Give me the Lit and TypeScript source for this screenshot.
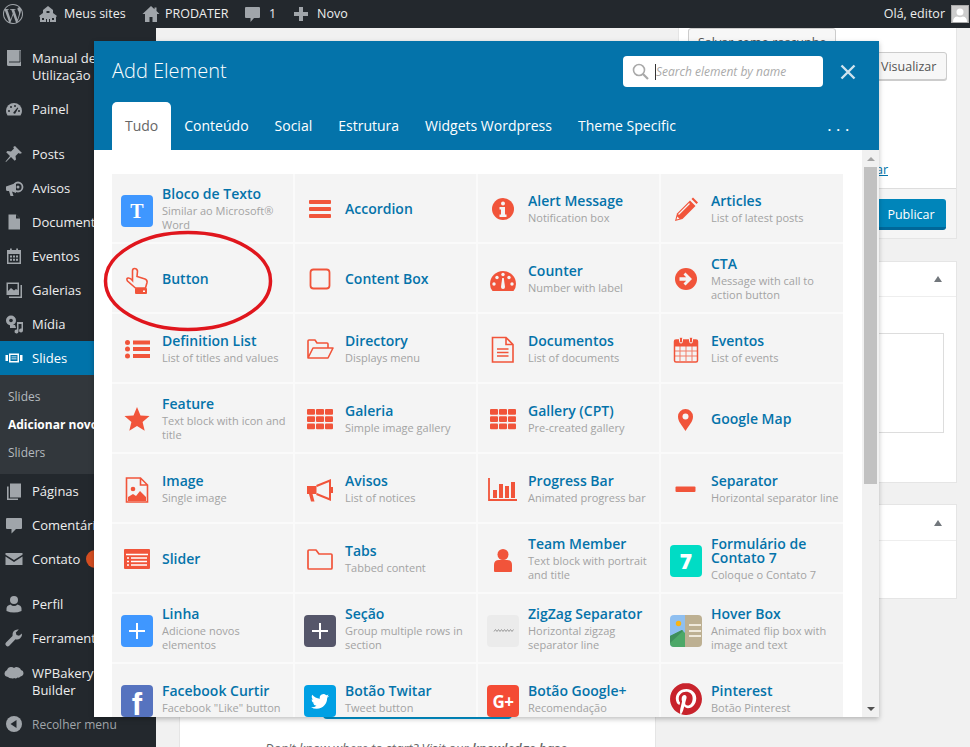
import { LitElement, html, css, svg } from 'lit';
import { customElement } from 'lit/decorators.js';

const WP_LOGO = 'M21.469 6.825c.84 1.537 1.318 3.3 1.318 5.175 0 3.979-2.156 7.456-5.363 9.325l3.295-9.527c.615-1.54.82-2.771.82-3.864 0-.405-.026-.78-.07-1.11m-7.981.105c.647-.03 1.232-.105 1.232-.105.582-.075.514-.93-.067-.899 0 0-1.755.135-2.88.135-1.064 0-2.85-.15-2.85-.15-.585-.03-.661.855-.075.885 0 0 .54.061 1.125.09l1.68 4.605-2.37 7.08L5.354 6.9c.649-.03 1.234-.1 1.234-.1.585-.075.516-.93-.065-.896 0 0-1.746.138-2.874.138-.2 0-.438-.008-.69-.015C4.911 3.15 8.235 1.215 12 1.215c2.809 0 5.365 1.072 7.286 2.833-.046-.003-.091-.009-.141-.009-1.06 0-1.812.923-1.812 1.914 0 .89.513 1.643 1.06 2.531.411.72.89 1.643.89 2.977 0 .915-.354 1.994-.821 3.479l-1.075 3.585-3.9-11.61.001.014zM12 22.784c-1.059 0-2.081-.153-3.048-.437l3.237-9.406 3.315 9.087c.024.053.05.101.078.149-1.12.393-2.325.609-3.582.609M1.211 12c0-1.564.336-3.05.935-4.39L7.29 21.709C3.694 19.96 1.212 16.271 1.211 12M12 0C5.385 0 0 5.385 0 12s5.385 12 12 12 12-5.385 12-12S18.615 0 12 0';
const TWITTER = 'M23.953 4.57a10 10 0 01-2.825.775 4.958 4.958 0 002.163-2.723c-.951.555-2.005.959-3.127 1.184a4.92 4.92 0 00-8.384 4.482C7.69 8.095 4.067 6.13 1.64 3.162a4.822 4.822 0 00-.666 2.475c0 1.71.87 3.213 2.188 4.096a4.904 4.904 0 01-2.228-.616v.06a4.923 4.923 0 003.946 4.827 4.996 4.996 0 01-2.212.085 4.936 4.936 0 004.604 3.417 9.867 9.867 0 01-6.102 2.105c-.39 0-.779-.023-1.17-.067a13.995 13.995 0 007.557 2.209c9.053 0 13.998-7.496 13.998-13.985 0-.21 0-.42-.015-.63A9.935 9.935 0 0024 4.59z';
const PINTEREST = 'M12.017 0C5.396 0 .029 5.367.029 11.987c0 5.079 3.158 9.417 7.618 11.162-.105-.949-.199-2.403.041-3.439.219-.937 1.406-5.957 1.406-5.957s-.359-.72-.359-1.781c0-1.663.967-2.911 2.168-2.911 1.024 0 1.518.769 1.518 1.688 0 1.029-.653 2.567-.992 3.992-.285 1.193.6 2.165 1.775 2.165 2.128 0 3.768-2.245 3.768-5.487 0-2.861-2.063-4.869-5.008-4.869-3.41 0-5.409 2.562-5.409 5.199 0 1.033.394 2.143.889 2.741.099.12.112.225.085.345-.09.375-.293 1.199-.334 1.363-.053.225-.172.271-.401.165-1.495-.69-2.433-2.878-2.433-4.646 0-3.776 2.748-7.252 7.92-7.252 4.158 0 7.392 2.967 7.392 6.923 0 4.135-2.607 7.462-6.233 7.462-1.214 0-2.354-.629-2.758-1.379l-.749 2.848c-.269 1.045-1.004 2.352-1.498 3.146 1.123.345 2.306.535 3.55.535 6.607 0 11.985-5.365 11.985-11.987C23.97 5.39 18.592.026 11.985.026L12.017 0z';

const A = '#f1543a';
const BG = '#f4f4f4';

const grid3 = svg`<g fill="${A}">
  ${[6, 13.2, 20.4].map(y => [3, 12, 21].map(x => svg`<rect x="${x}" y="${y}" width="8" height="5.8" rx="1"/>`))}
</g>`;

const plus = svg`<path d="M16 8v16M8 16h16" stroke="#fff" stroke-width="2"/>`;

// icons of the element grid, drawn in a 32x32 box
const icons: Record<string, unknown> = {
  accordion: svg`<g fill="${A}"><rect x="5" y="7" width="22" height="4" rx="1"/><rect x="5" y="14" width="22" height="4" rx="1"/><rect x="5" y="21" width="22" height="4" rx="1"/></g>`,
  hand: svg`<path d="M11.500 8q0-2.500 2-2.500 2.500 0 3 2.500l-.5 5.500 8 2.500q2.500 1 2 3.500l-1.500 5.500H14.500L6.500 18q-1.500-2.500.5-3 2-.5 4.500 2.500z" fill="none" stroke="${A}" stroke-width="1.600"/><rect x="14" y="25" width="12" height="6" rx="1" fill="${A}"/><rect x="22" y="27.500" width="2" height="1.500" fill="#fff"/>`,
  box: svg`<rect x="6.500" y="6.500" width="19" height="19" rx="3" fill="none" stroke="${A}" stroke-width="1.800"/>`,
  info: svg`<circle cx="16" cy="16" r="11" fill="${A}"/><circle cx="16" cy="10.500" r="2" fill="${BG}"/><path d="M12.500 14h5.500v7.500h1.500V24h-7v-2.500H14v-5h-1.500z" fill="${BG}"/>`,
  gauge: svg`<path d="M5.500 28Q3 25 3 21a13 13 0 0 1 26 0q0 4-2.500 7z" fill="${A}"/><g fill="${BG}"><circle cx="7" cy="21" r="1.700"/><circle cx="10" cy="14.500" r="1.700"/><circle cx="16" cy="11.500" r="1.700"/><circle cx="22" cy="14.500" r="1.700"/><circle cx="25" cy="21" r="1.700"/><path d="M15.200 15h1.600l1.200 9a2 2 0 0 1-4 0z"/></g>`,
  pencil: svg`<path d="M5 28l2-7.500L20 7.500l5.500 5.500L12.500 26z" fill="${A}"/><path d="M21.500 6l1.500-1.500 5 5-1.500 1.500z" fill="${A}"/><path d="M8.500 21.500l11-11" stroke="${BG}" stroke-width="1.200"/><path d="M6.500 26.500l.8-3 2.200 2.200z" fill="${BG}"/>`,
  cta: svg`<circle cx="16" cy="16" r="11" fill="${A}"/><path d="M15.500 9.500l6.500 6.500-6.500 6.500-2-2 2.700-2.800H9.500v-3.400h6.700l-2.700-2.800z" fill="${BG}"/>`,
  deflist: svg`<g fill="${A}"><circle cx="6.500" cy="9.500" r="2.500"/><circle cx="6.500" cy="16" r="2.500"/><circle cx="6.500" cy="23" r="2.500"/><rect x="12" y="7.500" width="17" height="4"/><rect x="12" y="14" width="17" height="4"/><rect x="12" y="21" width="17" height="4"/></g>`,
  folderOpen: svg`<path d="M4 25V8q0-1 1-1h6l2 3h10q1 0 1 1v4M4 25l5-10h20l-5 10z" fill="none" stroke="${A}" stroke-width="1.600" stroke-linejoin="round"/>`,
  doc: svg`<path d="M5.500 4.500h13.500l7 7v17.500H5.500zM19 4.500v7h7M10 16h11.500M10 19.500h11.500M10 23h11.500" fill="none" stroke="${A}" stroke-width="1.600"/>`,
  calendar: svg`<rect x="4.500" y="7" width="23" height="22" rx="1.500" fill="none" stroke="${A}" stroke-width="1.500"/><rect x="4" y="7" width="24" height="6.500" rx="1.500" fill="${A}"/><rect x="9.500" y="4" width="3" height="6" rx="1.500" fill="${A}" stroke="${BG}"/><rect x="19.500" y="4" width="3" height="6" rx="1.500" fill="${A}" stroke="${BG}"/><path d="M10 13v15M16 13v15M22 13v15M5 18h22M5 23h22" stroke="${A}" stroke-width="1" opacity=".75"/>`,
  star: svg`<path d="M16 4l3.500 8.400 9 .7-6.900 5.900 2.100 8.800L16 23.100l-7.700 4.700 2.100-8.800-6.900-5.900 9-.7z" fill="${A}"/>`,
  grid: grid3,
  pin: svg`<path d="M15.500 28C12 22 8 19 8 13.500a7.500 7.500 0 0 1 15 0C23 19 19 22 15.500 28z" fill="${A}"/><circle cx="15.500" cy="13.500" r="3" fill="${BG}"/>`,
  image: svg`<path d="M5.500 5h14l7 7v17H5.500zM19.500 5v7h7" fill="none" stroke="${A}" stroke-width="1.600"/><circle cx="12" cy="16" r="2.300" fill="${A}"/><path d="M7 28v-4l5-3 3 2 4-5 6 6v4z" fill="${A}"/>`,
  megaphone: svg`<path d="M3 13h9.500v8H8.500l2 7.500H7L5 21H3z" fill="${A}"/><path d="M12.500 13l13.500-5.500v19L12.500 21" fill="none" stroke="${A}" stroke-width="2"/><rect x="26" y="14" width="3" height="6" fill="${A}"/>`,
  chart: svg`<path d="M2 5v22h28" fill="none" stroke="${A}" stroke-width="1.800"/><g fill="${A}"><rect x="6" y="17" width="4" height="8"/><rect x="12" y="11" width="4" height="14"/><rect x="18" y="13" width="4" height="12"/><rect x="24" y="9" width="4" height="16"/></g>`,
  sep: svg`<rect x="5.500" y="13.500" width="20" height="5.500" rx="1" fill="${A}"/>`,
  slider: svg`<rect x="3" y="6" width="26" height="20" rx="1" fill="${A}"/><path d="M5 11.500h22M10 15h16M10 18.500h16M10 22h16M6 15h2M6 18.500h2M6 22h2" stroke="#fff" stroke-width="1.300"/>`,
  folder: svg`<path d="M4 24V8q0-1 1-1h7l3 4h12q1 0 1 1v13q0 1-1 1H5q-1 0-1-1z" fill="none" stroke="${A}" stroke-width="1.700" stroke-linejoin="round"/>`,
  person: svg`<circle cx="16" cy="11.500" r="5.500" fill="${A}"/><path d="M7 28v-6q0-5 5-5h8q5 0 5 5v6q0 1-1 1H8q-1 0-1-1z" fill="${A}"/>`,
  plus,
  zigzag: svg`<path d="M7 16.500l1.500-2 1.500 2 1.500-2 1.500 2 1.500-2 1.500 2 1.500-2 1.500 2 1.500-2 1.500 2 1.500-2 1.500 2 1.500-2" fill="none" stroke="#9a9a9a" stroke-width="1"/>`,
  hover: svg`<rect width="15" height="32" fill="#8fbff0"/><rect x="15" width="17" height="32" fill="#bdb092"/><circle cx="8.500" cy="8.500" r="2.700" fill="#f9b415"/><path d="M0 27V21L12 15l3 3v14H0z" fill="#4da868"/><path d="M0 28V21L12 15l1 1z" fill="#3f8f5c"/><path d="M19 10h12M19 16h12M19 21h12" stroke="#efe9db" stroke-width="1.800"/>`,
  twitter: svg`<g transform="translate(7 7.500) scale(.75)"><path d="${TWITTER}" fill="#fff"/></g>`,
  pinterest: svg`<circle cx="16" cy="16" r="15" fill="#fff"/><g transform="scale(1.334)"><path d="${PINTEREST}" fill="#c8232c"/></g>`,
};

type Tile = { bg: string; icon?: string; text?: string; cls?: string };

const tiles: Record<string, Tile> = {
  text: { bg: '#3f97ff', text: 'T', cls: 'serif' },
  line: { bg: '#3f97ff', icon: 'plus' },
  section: { bg: '#55566a', icon: 'plus' },
  zig: { bg: '#ebebeb', icon: 'zigzag' },
  cf7: { bg: '#00dcc5', text: '7', cls: 'seven' },
  hover: { bg: 'transparent', icon: 'hover' },
  fb: { bg: '#5673bf', text: 'f', cls: 'fb' },
  tw: { bg: '#00a0e4', icon: 'twitter' },
  gp: { bg: '#f44b35', text: 'G+', cls: 'gplus' },
};

type Item = { t: string; d?: string; i?: string; tile?: string };

const items: Item[] = [
  { t: 'Bloco de Texto', d: 'Similar ao Microsoft® Word', tile: 'text' },
  { t: 'Accordion', i: 'accordion' },
  { t: 'Alert Message', d: 'Notification box', i: 'info' },
  { t: 'Articles', d: 'List of latest posts', i: 'pencil' },
  { t: 'Button', i: 'hand' },
  { t: 'Content Box', i: 'box' },
  { t: 'Counter', d: 'Number with label', i: 'gauge' },
  { t: 'CTA', d: 'Message with call to action button', i: 'cta' },
  { t: 'Definition List', d: 'List of titles and values', i: 'deflist' },
  { t: 'Directory', d: 'Displays menu', i: 'folderOpen' },
  { t: 'Documentos', d: 'List of documents', i: 'doc' },
  { t: 'Eventos', d: 'List of events', i: 'calendar' },
  { t: 'Feature', d: 'Text block with icon and title', i: 'star' },
  { t: 'Galeria', d: 'Simple image gallery', i: 'grid' },
  { t: 'Gallery (CPT)', d: 'Pre-created gallery', i: 'grid' },
  { t: 'Google Map', i: 'pin' },
  { t: 'Image', d: 'Single image', i: 'image' },
  { t: 'Avisos', d: 'List of notices', i: 'megaphone' },
  { t: 'Progress Bar', d: 'Animated progress bar', i: 'chart' },
  { t: 'Separator', d: 'Horizontal separator line', i: 'sep' },
  { t: 'Slider', i: 'slider' },
  { t: 'Tabs', d: 'Tabbed content', i: 'folder' },
  { t: 'Team Member', d: 'Text block with portrait and title', i: 'person' },
  { t: 'Formulário de Contato 7', d: 'Coloque o Contato 7', tile: 'cf7' },
  { t: 'Linha', d: 'Adicione novos elementos', tile: 'line' },
  { t: 'Seção', d: 'Group multiple rows in section', tile: 'section' },
  { t: 'ZigZag Separator', d: 'Horizontal zigzag separator line', tile: 'zig' },
  { t: 'Hover Box', d: 'Animated flip box with image and text', tile: 'hover' },
  { t: 'Facebook Curtir', d: 'Facebook "Like" button', tile: 'fb' },
  { t: 'Botão Twitar', d: 'Tweet button', tile: 'tw' },
  { t: 'Botão Google+', d: 'Recomendação', tile: 'gp' },
  { t: 'Pinterest', d: 'Botão Pinterest', i: 'pinterest' },
];

// admin menu icons, 20x20
const menuIcons: Record<string, unknown> = {
  book: svg`<path d="M3 2h14v16H4.500Q3 18 3 16.500z" fill="currentColor"/><path d="M16 2.500V14H5" fill="none" stroke="#23282d" stroke-width=".9"/>`,
  gauge: svg`<path d="M3.500 16.500Q2 14.500 2 12a8 8 0 0 1 16 0q0 2.500-1.500 4.500z" fill="currentColor"/><g fill="#23282d"><circle cx="5" cy="12" r="1"/><circle cx="7" cy="8" r="1"/><circle cx="11" cy="7" r="1"/><circle cx="15" cy="12" r="1"/><path d="M13.500 8.500l.8.500-3 5.500a1.300 1.300 0 0 1-2-1z"/></g>`,
  pin: svg`<path d="M11 2l7 7-2 .8-1.500-.8-3 3 .5 3.500-1.300 1.300L7 13.100 2 18l-.5-.5L6 12 2.200 8.300 3.500 7l3.500.5 3-3-.8-1.500z" fill="currentColor"/>`,
  megaphone: svg`<path d="M2 8.500l10-3.500v10L8 13.600l1.500 4.400H6.500L5 13H3.500Q2 13 2 11.500z" fill="currentColor"/><circle cx="14" cy="9" r="4.500" fill="none" stroke="currentColor" stroke-width="1.800"/><circle cx="14" cy="9" r="1.500" fill="currentColor"/>`,
  page: svg`<path d="M4.500 2.500h7.500l4 4v11h-11.500z" fill="currentColor"/><path d="M12 2.500v4h4z" fill="#23282d"/>`,
  calendar: svg`<path d="M3 4h14v14H3zM4.500 8v8.500h11V8z" fill="currentColor"/><path d="M6 2.500h1.800v3H6zM12.200 2.500H14v3h-1.800z" fill="currentColor"/><path d="M6 9.500h2v2H6zM9 9.500h2v2H9zM12 9.500h2v2h-2zM6 12.800h2v2H6zM9 12.800h2v2H9zM12 12.800h2v2h-2z" fill="currentColor"/>`,
  gallery: svg`<path d="M2.500 2.500h12.500v12.500H2.500zM4 4v7l3-3 3 2.500 2-1.500 1.500 1V4z" fill="currentColor"/><path d="M16.500 5H18v13H5v-1.500h11.500z" fill="currentColor"/>`,
  media: svg`<circle cx="7" cy="6.500" r="5" fill="currentColor"/><circle cx="7" cy="6.500" r="1.800" fill="#23282d"/><path d="M6 11h5l1 3H6z" fill="currentColor"/><path d="M13 8h6v8.500a2 2 0 1 1-1.500-2V10h-3v7.500a2 2 0 1 1-1.500-2z" fill="currentColor"/>`,
  slides: svg`<path d="M5 5.500h10v9H5zM6.500 7v6h7V7z" fill="currentColor"/><path d="M7.500 8.500h5v.8h-5zM7.500 10.500h5v.8h-5z" fill="currentColor"/><path d="M1.500 7h2.500v6H1.500zM16 7h2.500v6H16z" fill="currentColor"/>`,
  pages: svg`<path d="M6 2.500h11v14H6z" fill="currentColor"/><path d="M3 5.500h1.600v11.900H14V19H3z" fill="currentColor"/>`,
  comment: svg`<path d="M3 3h14q1 0 1 1v9q0 1-1 1h-5l-4.500 4.500V14H3q-1 0-1-1V4q0-1 1-1z" fill="currentColor"/>`,
  mail: svg`<path d="M1.500 4h17v1.800L10 11 1.500 5.800zM1.500 7.500L10 13l8.500-5.500V16h-17z" fill="currentColor"/>`,
  user: svg`<circle cx="10" cy="6" r="4" fill="currentColor"/><path d="M2.500 17v-2.500q0-3 4-4 1.500 1.500 3.500 1.500t3.500-1.500q4 1 4 4V17q-3.500 1.500-7.500 1.500T2.500 17z" fill="currentColor"/>`,
  wrench: svg`<path d="M18 5.500q.5 3-2 5-2 1.500-4.500.8L5 18q-1.500 1-3-.5T2 14.500l6.500-6.500Q8 5 9.800 3q2-2 5-1.500l-3 3 .7 2.500 2.500.7z" fill="currentColor"/>`,
  cloud: svg`<path d="M4 15q-3.500-.5-3.500-3.500Q.5 9 3 8q1-3 4-3 2 0 3 1 2-1.500 4.500-.5 2 .8 2.500 2.500 2.500.5 2.500 3t-3 3.500q-1 1.500-3 1-1.500 1.500-3.500.5-1 1-2.500.3-2 .3-3.500-1.300z" fill="currentColor"/>`,
  collapse: svg`<circle cx="10" cy="10" r="8" fill="currentColor"/><path d="M12.500 6v8L6.500 10z" fill="#23282d"/>`,
};

type Menu = { label: unknown; icon: string; cls?: string; badge?: boolean };

const menuA: Menu[] = [
  { label: html`Manual de<br />Utilização`, icon: 'book', cls: 'two' },
  { label: 'Painel', icon: 'gauge' },
];
const menuB: Menu[] = [
  { label: 'Posts', icon: 'pin' },
  { label: 'Avisos', icon: 'megaphone' },
  { label: 'Documentos', icon: 'page' },
  { label: 'Eventos', icon: 'calendar' },
  { label: 'Galerias', icon: 'gallery' },
  { label: 'Mídia', icon: 'media' },
  { label: 'Slides', icon: 'slides', cls: 'active' },
];
const menuC: Menu[] = [
  { label: 'Páginas', icon: 'pages' },
  { label: 'Comentários', icon: 'comment' },
  { label: 'Contato', icon: 'mail', badge: true },
];
const menuD: Menu[] = [
  { label: 'Perfil', icon: 'user' },
  { label: 'Ferramentas', icon: 'wrench' },
  { label: html`WPBakery Page<br />Builder`, icon: 'cloud', cls: 'two tall' },
  { label: 'Recolher menu', icon: 'collapse', cls: 'dim' },
];

const tabs = ['Tudo', 'Conteúdo', 'Social', 'Estrutura', 'Widgets Wordpress', 'Theme Specific'];

@customElement('app-root')
export class AppRoot extends LitElement {
  static styles = css`
    :host {
      display: block;
      position: relative;
      width: 970px;
      height: 747px;
      overflow: hidden;
      background: #f1f1f1;
      font-family: 'Open Sans', sans-serif;
      font-size: 12.5px;
      color: #444;
    }

    .bar {
      height: 28px;
      background: #23282d;
      color: #eee;
      display: flex;
      align-items: center;
      line-height: 28px;
      white-space: nowrap;
    }
    .bar svg {
      flex: none;
      fill: #a0a5aa;
      color: #a0a5aa;
    }
    .bar-item {
      display: flex;
      align-items: center;
    }
    .hello {
      margin-left: auto;
      margin-right: 6px;
    }
    .avatar {
      width: 18px;
      height: 18px;
      margin-right: 1px;
      background: #ccc;
      border: 1px solid #aaa;
      box-sizing: border-box;
      overflow: hidden;
    }

    .page {
      display: flex;
      height: 719px;
    }

    .side {
      width: 156px;
      flex: none;
      background: #23282d;
      padding-top: 13px;
      box-sizing: border-box;
      color: #eee;
      font-size: 13px;
      white-space: nowrap;
    }
    .group {
      margin-bottom: 11px;
    }
    .menu {
      display: flex;
      align-items: center;
      height: 34px;
      padding-left: 4px;
      line-height: 17px;
    }
    .menu svg {
      width: 20px;
      height: 20px;
      margin-right: 8px;
      flex: none;
      color: #a0a5aa;
    }
    .menu.two {
      height: 51px;
    }
    .menu.tall {
      height: 52px;
    }
    .menu.tall span {
      margin-top: 1px;
    }
    .menu.two svg {
      align-self: flex-start;
      margin-top: 7px;
    }
    .menu.active {
      background: #0073aa;
      color: #fff;
    }
    .menu.active svg {
      color: #fff;
    }
    .menu.dim {
      color: #a0a5aa;
      font-size: 12px;
    }
    .badge {
      width: 18px;
      height: 18px;
      margin-left: 6px;
      border-radius: 50%;
      background: #d54e21;
    }
    .sub {
      background: #32373c;
      padding: 8px 0 7px;
      font-size: 12px;
      color: #b4b9be;
    }
    .sub div {
      height: 28px;
      line-height: 28px;
      padding-left: 8px;
    }
    .sub .cur {
      color: #fff;
      font-weight: 700;
    }

    .main {
      flex: 1;
      display: flex;
      align-items: flex-start;
    }
    .left {
      width: 477px;
      margin: 620px 0 0 23px;
      background: #fff;
      border: 1px solid #e5e5e5;
      box-sizing: border-box;
      height: 120px;
      display: flex;
      flex-direction: column;
      align-items: center;
    }
    .start {
      width: 189px;
      height: 31px;
      margin-top: 39px;
      flex: none;
      border-radius: 4px;
      background: #0099d5;
    }
    .hint {
      margin-top: 20px;
      font-style: italic;
      font-size: 13px;
      line-height: 18px;
      color: #666;
    }
    .hint b {
      font-weight: 600;
    }

    .right {
      width: 279px;
      margin-left: 22px;
    }
    .box {
      background: #fff;
      border: 1px solid #e5e5e5;
      box-sizing: border-box;
    }
    .box1 {
      border-top: 0;
      height: 211px;
      display: flex;
      flex-direction: column;
    }
    .minor {
      flex: 1;
      display: flex;
      flex-direction: column;
      padding: 0 9px 9px;
    }
    .btns {
      display: flex;
      justify-content: space-between;
      align-items: flex-start;
    }
    .btn {
      box-sizing: border-box;
      height: 28px;
      line-height: 28px;
      padding: 0 9px;
      background: #f7f7f7;
      border: 1px solid #ccc;
      border-radius: 3px;
      box-shadow: 0 1px 0 #ccc;
      color: #555;
      white-space: nowrap;
    }
    .save {
      width: 148px;
    }
    .visual {
      margin-top: 24px;
      width: 76px;
    }
    .link {
      margin-top: auto;
      text-align: right;
      padding-right: 59px;
      line-height: 18px;
      color: #0073aa;
      text-decoration: underline;
    }
    .major {
      height: 50px;
      border-top: 1px solid #ddd;
      background: #f5f5f5;
      box-sizing: border-box;
      display: flex;
      justify-content: flex-end;
      padding: 10px 10px 0 0;
    }
    .publish {
      box-sizing: border-box;
      width: 70px;
      height: 31px;
      line-height: 32px;
      text-align: center;
      border-radius: 3px;
      background: #0085ba;
      border-bottom: 3px solid #006799;
      color: #fff;
    }
    .hdr {
      height: 35px;
      border-bottom: 1px solid #eee;
      box-sizing: border-box;
      display: flex;
      align-items: center;
      justify-content: flex-end;
      padding-right: 14px;
    }
    .tri {
      width: 0;
      height: 0;
      border-left: 4px solid transparent;
      border-right: 4px solid transparent;
      border-bottom: 6px solid #72777c;
    }
    .box2 {
      height: 222px;
      margin-top: 22px;
      padding-bottom: 50px;
    }
    .area {
      height: 100px;
      margin: 36px 12px 0 11px;
      border: 1px solid #ddd;
      box-sizing: border-box;
    }
    .box3 {
      height: 95px;
      margin-top: 21px;
    }
    .box3 .hdr {
      height: 36px;
    }

    /* the modal lies over the whole admin page */
    .modal {
      position: absolute;
      left: 94px;
      top: 41px;
      width: 785px;
      height: 676px;
      background: #fff;
      box-shadow: 0 2px 5px rgba(0, 0, 0, 0.25);
      display: flex;
      flex-direction: column;
    }
    .head {
      height: 109px;
      flex: none;
      background: #0473aa;
      color: #fff;
      display: flex;
      flex-direction: column;
    }
    .top {
      height: 61px;
      display: flex;
      align-items: center;
      padding: 0 23px 0 18px;
      box-sizing: border-box;
    }
    .title {
      font-size: 20px;
      font-weight: 300;
      line-height: 30px;
      margin-top: -1px;
    }
    .search {
      margin-left: auto;
      width: 200px;
      height: 31px;
      background: #fff;
      border-radius: 4px;
      display: flex;
      align-items: center;
      padding-left: 9px;
      box-sizing: border-box;
    }
    .search svg {
      flex: none;
      margin-right: 6px;
    }
    .caret {
      width: 1px;
      height: 16px;
      background: #333;
      flex: none;
    }
    .search input {
      border: 0;
      outline: 0;
      padding: 0;
      flex: 1;
      min-width: 0;
      background: transparent;
      font: italic 12px 'Open Sans', sans-serif;
    }
    .search input::placeholder {
      color: #aaa;
      opacity: 1;
    }
    .close {
      margin-left: 17px;
      flex: none;
    }
    .tabs {
      flex: 1;
      display: flex;
      padding-left: 18px;
      font-size: 14px;
      line-height: 48px;
    }
    .tab {
      padding: 0 13px;
      white-space: nowrap;
    }
    .tab.on {
      background: #fff;
      color: #666;
      border-radius: 5px 5px 0 0;
    }
    .more {
      margin-left: auto;
      margin-right: 25px;
      font-weight: 600;
      letter-spacing: 5px;
    }

    .body {
      flex: 1;
      min-height: 0;
      display: flex;
    }
    .scroll {
      flex: 1;
      overflow: hidden;
      padding: 24px 0 0 18px;
    }
    .grid {
      display: grid;
      grid-template-columns: repeat(3, 181px) 182px;
      grid-auto-rows: 68px;
      gap: 2px;
      width: 731px;
      background: #fafafa;
    }
    .cell {
      background: #f4f4f4;
      display: flex;
      align-items: center;
      padding: 0 4px 0 9px;
    }
    .ico {
      width: 32px;
      height: 32px;
      flex: none;
      margin: 2px 9px 0 0;
    }
    .tile {
      width: 32px;
      height: 32px;
      flex: none;
      margin: 6px 9px 0 0;
      border-radius: 4px;
      overflow: hidden;
      display: flex;
      align-items: center;
      justify-content: center;
      color: #fff;
    }
    .tile svg {
      width: 32px;
      height: 32px;
    }
    .serif {
      font: 700 20px 'Liberation Serif', serif;
    }
    .seven {
      font: 800 21px 'Open Sans', sans-serif;
    }
    .fb {
      font: 700 31px 'Liberation Sans', sans-serif;
      padding-top: 7px;
      box-sizing: border-box;
    }
    .gplus {
      font: 700 17px 'Open Sans', sans-serif;
      letter-spacing: -0.5px;
    }
    .txt {
      margin-top: 2px;
    }
    .name {
      font-size: 14px;
      font-weight: 600;
      line-height: 14px;
      color: #0473aa;
    }
    .desc {
      margin-top: 3px;
      font-size: 11px;
      line-height: 14px;
      color: #a3a3a3;
    }

    .bar-v {
      width: 17px;
      flex: none;
      background: #f1f1f1;
      display: flex;
      flex-direction: column;
      align-items: center;
    }
    .up,
    .down {
      width: 0;
      height: 0;
      border-left: 4px solid transparent;
      border-right: 4px solid transparent;
      flex: none;
    }
    .up {
      margin-top: 7px;
      margin-bottom: 6px;
      border-bottom: 4px solid #a3a3a3;
    }
    .down {
      margin-top: auto;
      margin-bottom: 6px;
      border-top: 4px solid #505050;
    }
    .thumb {
      width: 13px;
      height: 317px;
      background: #c1c1c1;
    }

    /* hand drawn mark on top of the screenshot */
    .mark {
      position: absolute;
      left: 100px;
      top: 226px;
      pointer-events: none;
    }
  `;

  private renderMenu(m: Menu) {
    return html`<div class="menu ${m.cls ?? ''}">
      <svg viewBox="0 0 20 20">${menuIcons[m.icon]}</svg>
      <span>${m.label}</span>
      ${m.badge ? html`<span class="badge"></span>` : null}
    </div>`;
  }

  private renderCell(it: Item) {
    let icon: unknown;
    if (it.tile) {
      const t = tiles[it.tile];
      icon = html`<div class="tile ${t.cls ?? ''}" style="background:${t.bg}">
        ${t.icon ? html`<svg viewBox="0 0 32 32">${icons[t.icon]}</svg>` : t.text}
      </div>`;
    } else {
      icon = html`<svg class="ico" viewBox="0 0 32 32">${icons[it.i as string]}</svg>`;
    }
    return html`<div class="cell">
      ${icon}
      <div class="txt">
        <div class="name">${it.t}</div>
        ${it.d ? html`<div class="desc">${it.d}</div>` : null}
      </div>
    </div>`;
  }

  render() {
    return html`
      <div class="bar">
        <svg style="margin-left:3px" width="20" height="20" viewBox="0 0 24 24"><path d="${WP_LOGO}" /></svg>
        <div class="bar-item" style="margin-left:15px">
          <svg width="20" height="20" viewBox="0 0 20 20"><path d="M10 2l5 4v3l4 3-1 1v5h-6v-3h-1v3H9v-3H8v3H2v-5l-1-1 4-3V6zM8.500 7v2h3V7zM4 14v2h2v-2zM14 14v2h2v-2z" /></svg>
          <span style="margin-left:6px;width:62px">Meus sites</span>
        </div>
        <div class="bar-item" style="margin-left:15px">
          <svg width="20" height="20" viewBox="0 0 20 20"><path d="M10 2L1.500 10H4v8h4.500v-5h3v5H16v-8h2.500L15.500 7V3.500H13.500v1.700z" /></svg>
          <span style="margin-left:4px;width:65px">PRODATER</span>
        </div>
        <div class="bar-item" style="margin-left:12px">
          <svg width="20" height="20" viewBox="0 0 20 20"><path d="M4 3h13q1 0 1 1v9q0 1-1 1h-5l-3.500 4V14H4q-1 0-1-1V4q0-1 1-1z" /></svg>
          <span style="margin-left:7px;width:7px">1</span>
        </div>
        <div class="bar-item" style="margin-left:15px">
          <svg width="20" height="20" viewBox="0 0 20 20"><path d="M8 3h4v5h5v4h-5v5H8v-5H3V8h5z" /></svg>
          <span style="margin-left:6px">Novo</span>
        </div>
        <span class="hello">Olá, editor</span>
        <div class="avatar">
          <svg width="16" height="16" viewBox="0 0 16 16" style="fill:#fff;display:block"><circle cx="8" cy="6" r="3.500" /><path d="M1 16q0-5 4-5.500 3 1.500 6 0 4 .5 4 5.500z" /></svg>
        </div>
      </div>

      <div class="page">
        <nav class="side">
          <div class="group">${menuA.map(m => this.renderMenu(m))}</div>
          ${menuB.map(m => this.renderMenu(m))}
          <div class="sub">
            <div>Slides</div>
            <div class="cur">Adicionar novo</div>
            <div>Sliders</div>
          </div>
          <div class="group">${menuC.map(m => this.renderMenu(m))}</div>
          ${menuD.map(m => this.renderMenu(m))}
        </nav>

        <div class="main">
          <div class="left">
            <div class="start"></div>
            <div class="hint">Don't know where to start? Visit our <b>knowledge base</b>.</div>
          </div>
          <div class="right">
            <div class="box box1">
              <div class="minor">
                <div class="btns">
                  <div class="btn save">Salvar como rascunho</div>
                  <div class="btn visual">Visualizar</div>
                </div>
                <div class="link">Editar</div>
              </div>
              <div class="major"><div class="publish">Publicar</div></div>
            </div>
            <div class="box box2">
              <div class="hdr"><span class="tri"></span></div>
              <div class="area"></div>
            </div>
            <div class="box box3">
              <div class="hdr"><span class="tri"></span></div>
            </div>
          </div>
        </div>
      </div>

      <div class="modal">
        <div class="head">
          <div class="top">
            <div class="title">Add Element</div>
            <div class="search">
              <svg width="17" height="17" viewBox="0 0 17 17" fill="none" stroke="#a9a9a9" stroke-width="1.600"><circle cx="7" cy="7" r="5.500" /><path d="M11 11l5 5" stroke-width="2.200" /></svg>
              <span class="caret"></span>
              <input placeholder="Search element by name" />
            </div>
            <svg class="close" width="16" height="16" viewBox="0 0 16 16"><path d="M1.500 1.500l13 13M14.500 1.500l-13 13" stroke="#cfe3ee" stroke-width="2.400" /></svg>
          </div>
          <div class="tabs">
            ${tabs.map((t, i) => html`<div class="tab ${i === 0 ? 'on' : ''}">${t}</div>`)}
            <div class="more">...</div>
          </div>
        </div>
        <div class="body">
          <div class="scroll">
            <div class="grid">${items.map(it => this.renderCell(it))}</div>
          </div>
          <div class="bar-v">
            <span class="up"></span>
            <div class="thumb"></div>
            <span class="down"></span>
          </div>
        </div>
      </div>

      <svg class="mark" width="180" height="112" viewBox="0 0 180 112">
        <ellipse cx="88" cy="55" rx="82.500" ry="48.500" fill="none" stroke="#e0161d" stroke-width="3.500" />
      </svg>
    `;
  }
}
